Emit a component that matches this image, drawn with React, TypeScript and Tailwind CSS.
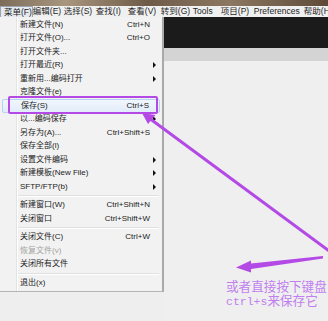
import React from "react";

type Item =
  | { sep: true }
  | { sep?: false; label: string; shortcut?: string; sub?: boolean; disabled?: boolean; hl?: boolean };

const items: Item[] = [
  { label: "新建文件(N)", shortcut: "Ctrl+N" },
  { label: "打开文件(O)...", shortcut: "Ctrl+O" },
  { label: "打开文件夹..." },
  { label: "打开最近(R)", sub: true },
  { label: "重新用...编码打开", sub: true },
  { label: "克隆文件(e)" },
  { label: "保存(S)", shortcut: "Ctrl+S", hl: true },
  { label: "以...编码保存", sub: true },
  { label: "另存为(A)...", shortcut: "Ctrl+Shift+S" },
  { label: "保存全部(l)" },
  { label: "设置文件编码", sub: true },
  { label: "新建模板(New File)", sub: true },
  { label: "SFTP/FTP(b)", sub: true },
  { sep: true },
  { label: "新建窗口(W)", shortcut: "Ctrl+Shift+N" },
  { label: "关闭窗口", shortcut: "Ctrl+Shift+W" },
  { sep: true },
  { label: "关闭文件(C)", shortcut: "Ctrl+W" },
  { label: "恢复文件(v)", disabled: true },
  { label: "关闭所有文件" },
  { sep: true },
  { label: "退出(x)" },
];

const menubar: { t: string; w: string }[] = [
  { t: "编辑(E)", w: "w-[31px]" },
  { t: "选择(S)", w: "w-[32px]" },
  { t: "查找(I)", w: "w-[32px]" },
  { t: "查看(V)", w: "w-[33px]" },
  { t: "转到(G)", w: "w-[32px]" },
  { t: "Tools", w: "w-[28px]" },
  { t: "项目(P)", w: "w-[33px]" },
  { t: "Preferences", w: "w-[50px]" },
  { t: "帮助(H)", w: "w-[30px]" },
];

function Row({ it }: { it: Exclude<Item, { sep: true }> }) {
  const color = it.disabled ? "text-[#a3a3a3]" : "text-[#1b1b1b]";
  if (it.hl) {
    return (
      <div className="h-[13.5px] mx-[2px] flex items-center pl-[18px] pr-[10px] rounded-[2px] border border-[#b7d3f3] bg-[linear-gradient(to_bottom,#f1f6fd,#e2ecf9)]">
        <span className={`flex-1 ${color}`}>{it.label}</span>
        <span className={color}>{it.shortcut}</span>
      </div>
    );
  }
  return (
    <div className="h-[13.5px] flex items-center pl-[20px] pr-[12px]">
      <span className={`flex-1 whitespace-nowrap ${color}`}>{it.label}</span>
      {it.shortcut && <span className={`whitespace-nowrap ${color}`}>{it.shortcut}</span>}
      {it.sub && (
        <span className="mr-[-6px] w-0 h-0 border-y-[3px] border-y-transparent border-l-[3px] border-l-[#111]" />
      )}
    </div>
  );
}

export default function App() {
  return (
    <div
      className="relative w-[328px] h-[321px] overflow-hidden bg-[#eeeeee] flex flex-col"
      style={{ fontFamily: '"Liberation Sans","Noto Sans CJK SC",sans-serif' }}
    >
      {/* top photo strip */}
      <div className="h-[6px] shrink-0 bg-[linear-gradient(to_right,#7d6c58,#a8967f_20%,#6e5b47_45%,#8c7762_70%,#5e4a37)]" />
      {/* menubar */}
      <div className="h-[11px] shrink-0 bg-[#f0f0f0] flex items-center text-[8.5px] text-[#1e1e1e] leading-none whitespace-nowrap">
        <div className="h-[12px] w-[33px] mt-[1px] pl-[3px] flex items-center border border-[#9aa4b0] bg-[#e6eaf0]">
          菜单(F)
        </div>
        <div className="w-[3px]" />
        {menubar.map((m) => (
          <div key={m.t} className={`${m.w} shrink-0`}>
            {m.t}
          </div>
        ))}
      </div>
      {/* body */}
      <div className="flex flex-1 min-h-0">
        <div className="w-[164px] shrink-0 self-start">
          <div className="border-r-2 border-b border-r-[#a9a9a9] border-b-[#b5b5b5] pt-[1px] pb-[1px] text-[8px] leading-none bg-[linear-gradient(to_right,#f2f2f2_16px,#e2e3e3_16px,#e2e3e3_17px,#ffffff_17px,#ffffff_18px,#f2f2f2_18px)]">
            {items.map((it, i) =>
              it.sep ? (
                <div key={i} className="h-[5px] flex flex-col justify-center ml-[18px] mr-[3px]">
                  <div className="h-px bg-[#e0e0e0]" />
                  <div className="h-px bg-white" />
                </div>
              ) : (
                <Row key={i} it={it} />
              )
            )}
          </div>
        </div>
        <div className="flex-1 flex flex-col">
          <div className="h-[31px] bg-[#1b1b1b]" />
          <div className="h-[13px] bg-[#d4d4d4]" />
          <div className="flex-1 bg-[#efefef]" />
        </div>
      </div>

      {/* purple annotation box */}
      <div className="absolute left-[8px] top-[96px] w-[150px] h-[18px] border-[2.5px] border-[#b44ae6] rounded-[2px]" />

      {/* arrows */}
      <svg className="absolute left-0 top-0" width="328" height="321" viewBox="0 0 328 321">
        <line x1="149" y1="118" x2="332" y2="253" stroke="#b44ae6" strokeWidth="3" />
        <polygon points="142,113 155.5,115 148,124" fill="#b44ae6" />
        <polygon points="323,256 251,263.5 251,260.5 236,267.5 251,272.5 251,269 323,258.5" fill="#b44ae6" />
      </svg>

      {/* annotation text */}
      <div
        className="absolute left-[226px] top-[279px] text-[12.6px] leading-[14px] text-[#c07ef0] whitespace-nowrap"
        style={{ fontFamily: '"Noto Sans CJK SC",sans-serif' }}
      >
        <div className="h-[14px]">或者直接按下键盘</div>
        <div className="h-[14px]">
          <span style={{ fontFamily: '"Liberation Mono",monospace' }} className="text-[11.5px]">
            ctrl+s
          </span>
          来保存它
        </div>
      </div>
    </div>
  );
}
